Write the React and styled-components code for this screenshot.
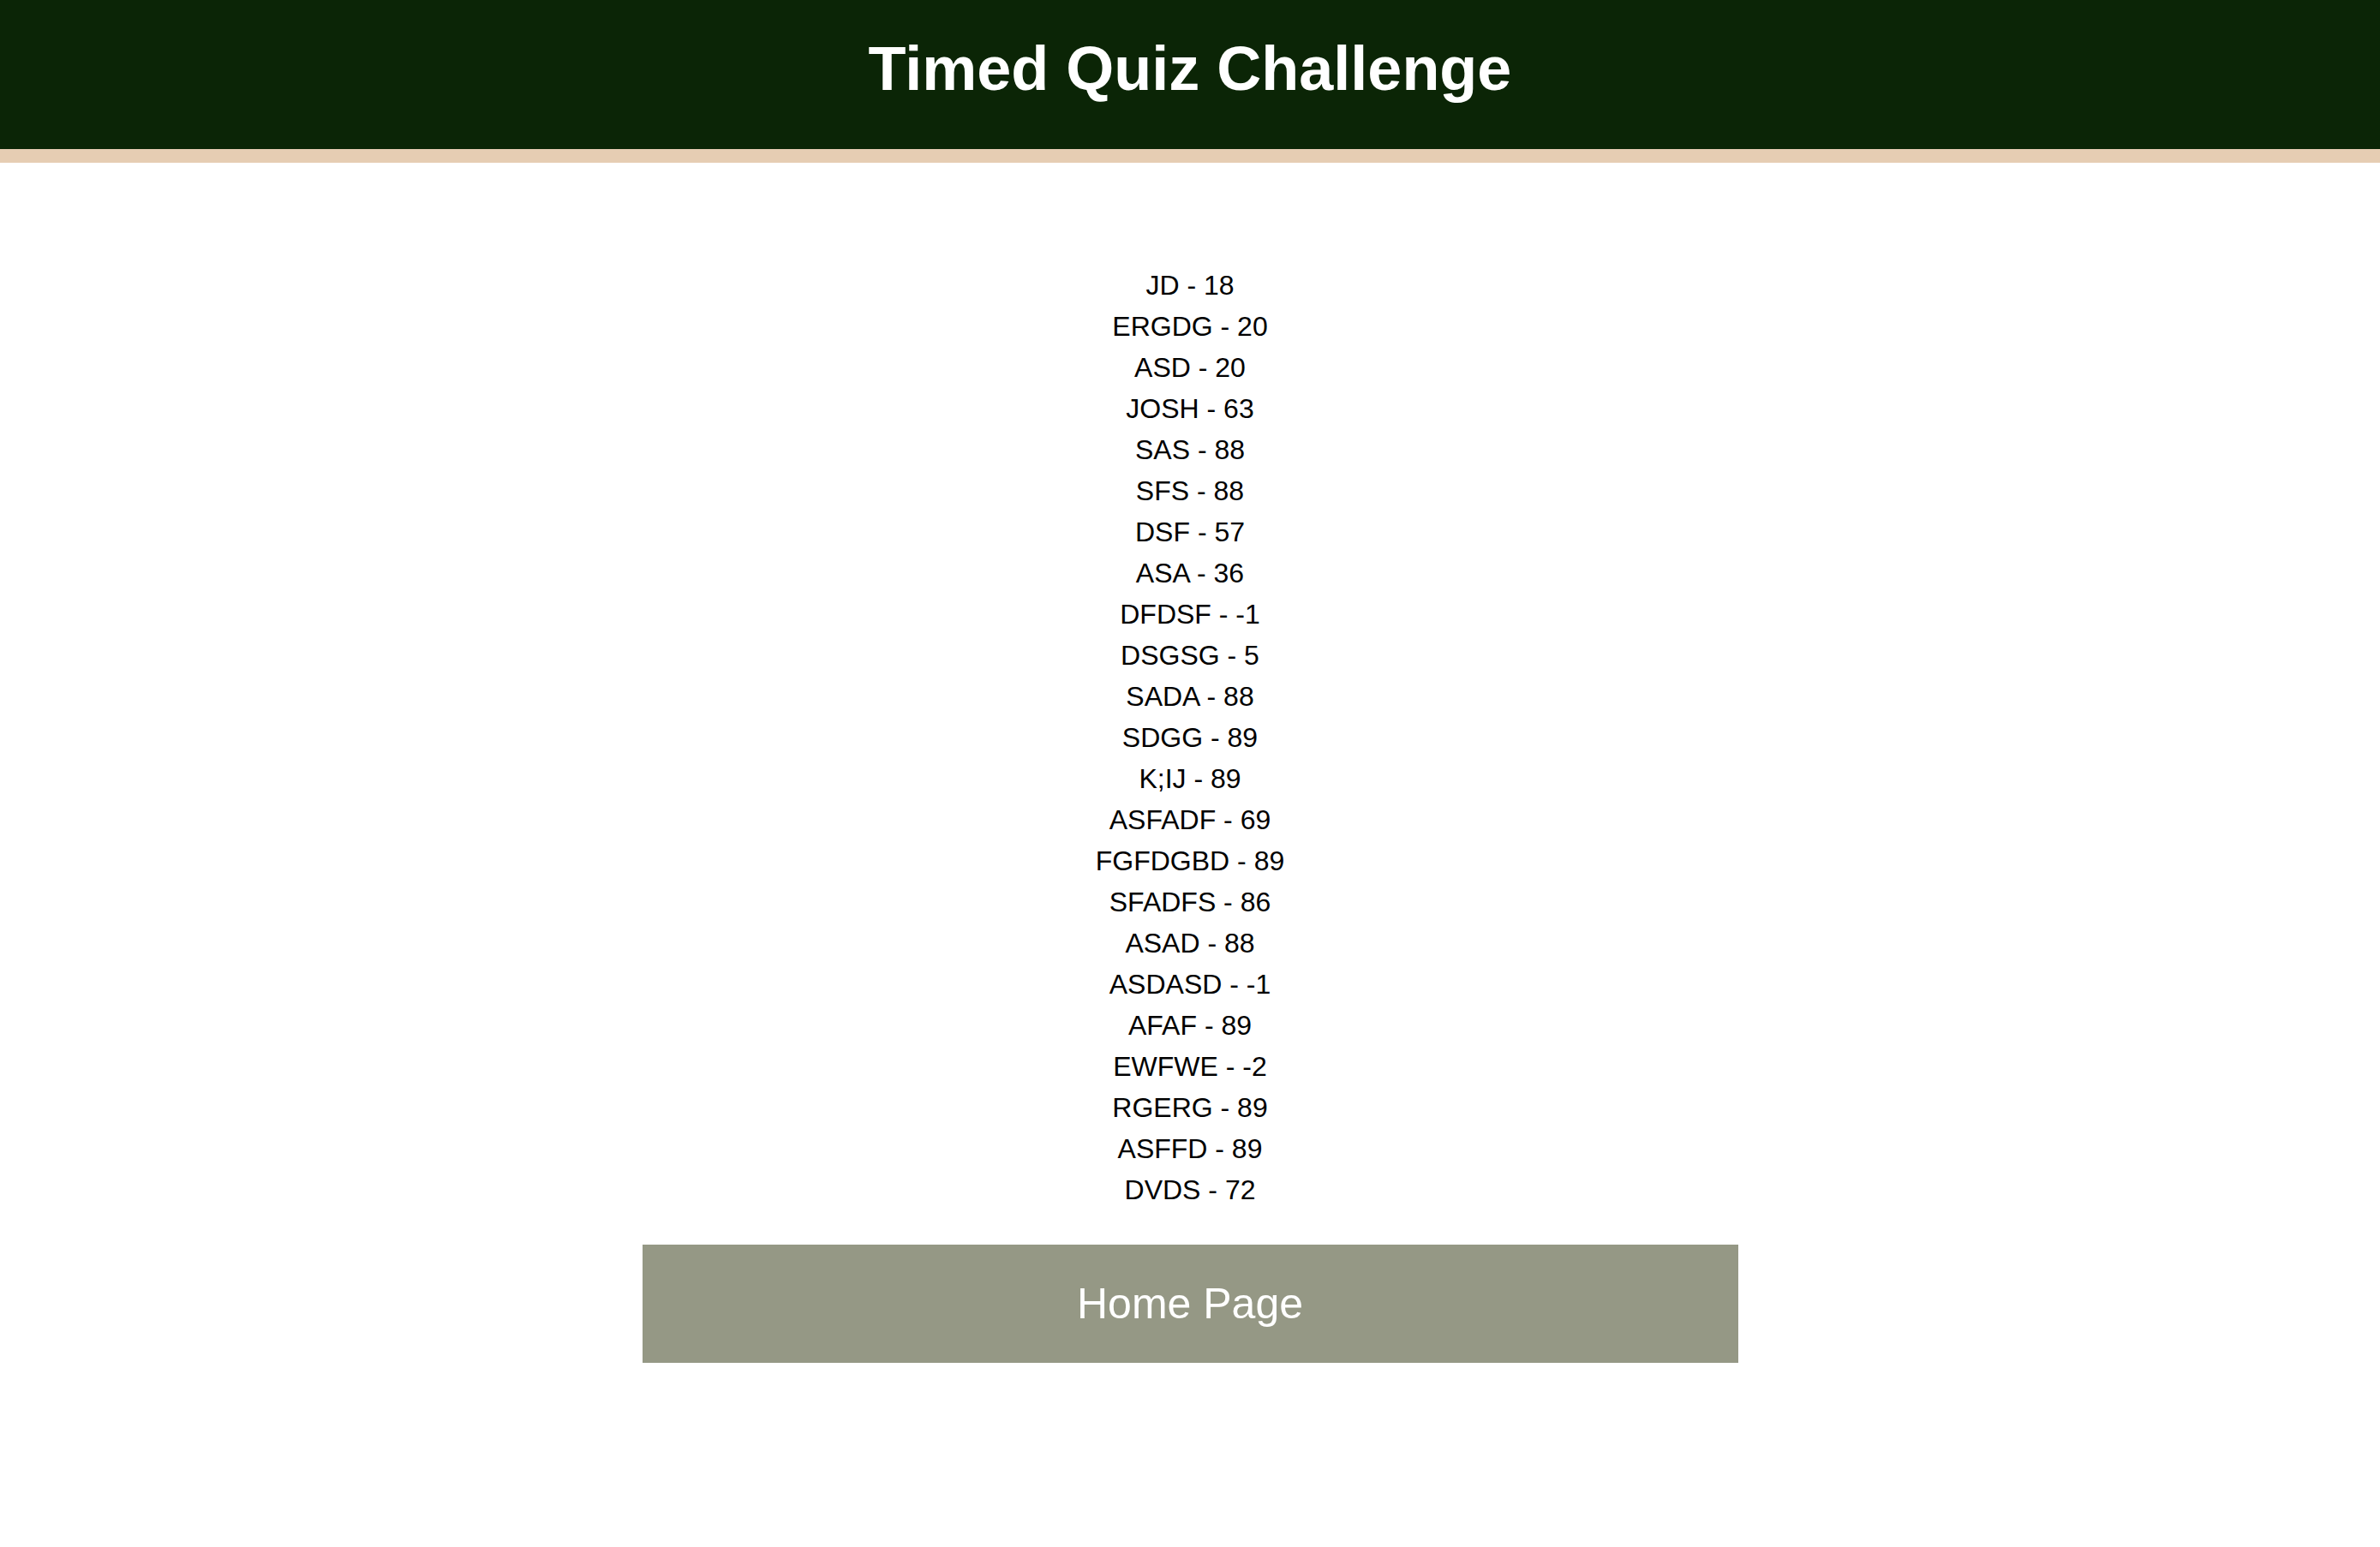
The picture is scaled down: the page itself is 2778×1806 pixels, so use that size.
import React from 'react'
import styled, { createGlobalStyle } from 'styled-components'

const scores = [
  ['JD', 18],
  ['ERGDG', 20],
  ['ASD', 20],
  ['JOSH', 63],
  ['SAS', 88],
  ['SFS', 88],
  ['DSF', 57],
  ['ASA', 36],
  ['DFDSF', -1],
  ['DSGSG', 5],
  ['SADA', 88],
  ['SDGG', 89],
  ['K;IJ', 89],
  ['ASFADF', 69],
  ['FGFDGBD', 89],
  ['SFADFS', 86],
  ['ASAD', 88],
  ['ASDASD', -1],
  ['AFAF', 89],
  ['EWFWE', -2],
  ['RGERG', 89],
  ['ASFFD', 89],
  ['DVDS', 72],
]

const App = () => (
  <>
    <GlobalStyle />
    <Header>
      <Title>Timed Quiz Challenge</Title>
    </Header>
    <Main>
      <ScoreList>
        {scores.map(([name, score], i) => (
          <ScoreItem key={i}>
            {name} - {score}
          </ScoreItem>
        ))}
      </ScoreList>
      <HomeButton>Home Page</HomeButton>
    </Main>
  </>
)

const GlobalStyle = createGlobalStyle`
  body {
    margin: 0;
    background: #fff;
    font-family: "Liberation Sans", Arial, sans-serif;
  }
`

const Header = styled.header`
  height: 174px;
  background-color: #0b2506;
  border-bottom: 16px solid #e6cdb3;
  display: flex;
  align-items: center;
  justify-content: center;
`

const Title = styled.h1`
  margin: 0 0 14px;
  color: #fff;
  font-size: 72px;
  font-weight: bold;
`

const Main = styled.main`
  display: flex;
  flex-direction: column;
  align-items: center;
  padding-top: 119px;
`

const ScoreList = styled.ul`
  list-style: none;
  margin: 0;
  padding: 0;
  text-align: center;
`

const ScoreItem = styled.li`
  font-size: 32px;
  line-height: 48px;
  color: #000;
`

const HomeButton = styled.button`
  margin-top: 40px;
  width: 1279px;
  height: 138px;
  border: none;
  background-color: #959885;
  color: #fff;
  font-family: "Liberation Sans", Arial, sans-serif;
  font-size: 50px;
  cursor: pointer;
`

export default App
